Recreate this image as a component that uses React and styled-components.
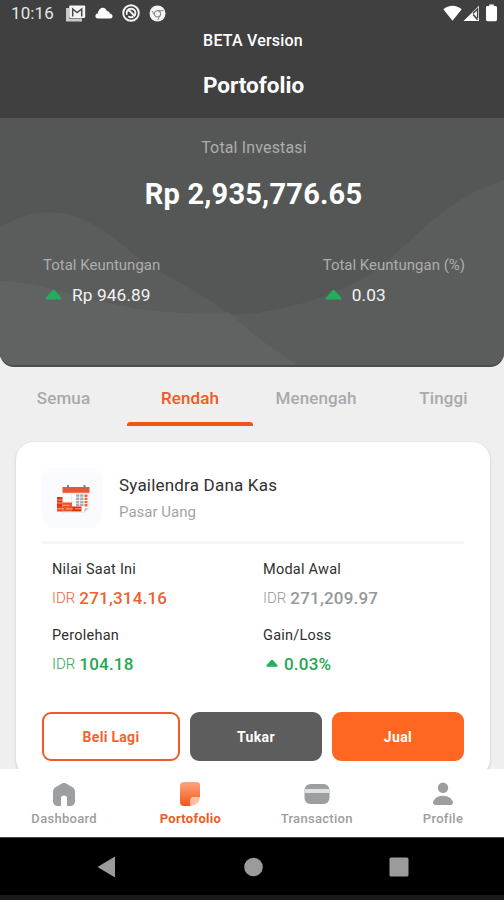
import React, { useState } from 'react'
import styled, { createGlobalStyle } from 'styled-components'

const GlobalStyle = createGlobalStyle`
  * {
    box-sizing: border-box;
  }

  body {
    margin: 0;
    background: #efefef;
    font-family: Roboto, sans-serif;
  }
`

const Screen = styled.div`
  width: 504px;
  height: 900px;
  display: flex;
  flex-direction: column;
  overflow: hidden;
  background: #efefef;
`

const Text = styled.span`
  display: block;
  white-space: nowrap;
  font-size: ${({ $size }) => $size}px;
  line-height: ${({ $line }) => $line || 20}px;
  font-weight: ${({ $weight }) => $weight || 400};
  letter-spacing: ${({ $track }) => $track || 0}px;
  color: ${({ $color }) => $color || 'inherit'};
`

const Header = styled.header`
  height: 118px;
  flex: none;
  background: #3f403f;
  color: #fff;
  text-align: center;
`

const StatusBar = styled.div`
  height: 26px;
  padding: 0 7px 0 11px;
  display: flex;
  align-items: center;
  justify-content: space-between;
  color: #e6e6e6;
`

const StatusGroup = styled.div`
  display: flex;
  align-items: center;
  gap: ${({ $gap }) => $gap}px;

  & svg {
    display: block;
  }
`

const StatusIcons = styled(StatusGroup)`
  margin-left: 3px;
`

const Title = styled.h1`
  margin: 21px 0 0;
  padding-left: 3px;
`

const Beta = styled.div`
  margin-top: 5px;
  padding-left: 2px;
`

const Summary = styled.section`
  height: 249px;
  flex: none;
  position: relative;
  overflow: hidden;
  border-radius: 0 0 14px 14px;
  background: #555756;
  border-bottom: 2px solid #4b4d4c;
`

const Waves = styled.svg`
  position: absolute;
  left: 0;
  top: 0;
`

const SummaryBody = styled.div`
  position: relative;
  padding-top: 20px;
  text-align: center;
  color: #fff;
`

const Caption = styled.div`
  padding-left: 4px;
`

const Amount = styled.div`
  margin-top: 19px;
  padding-left: 3px;
`

const GainRow = styled.div`
  margin-top: 44px;
  padding: 0 39px 0 43px;
  display: flex;
  justify-content: space-between;
  text-align: left;
`

const GainValue = styled.div`
  margin-top: 10px;
  padding-left: 2px;
  display: flex;
  align-items: center;
  gap: 10px;

  & svg {
    margin-bottom: 2px;
  }
`

const Tabs = styled.nav`
  height: 59px;
  flex: none;
  display: grid;
  grid-template-columns: 127px 126px 126px 125px;
`

const Tab = styled.button`
  padding: 21px 0 0;
  padding-left: ${({ $shift }) => $shift || 0}px;
  border: none;
  background: none;
  font-family: inherit;
  cursor: pointer;
  display: flex;
  flex-direction: column;
  align-items: center;
  justify-content: space-between;
  color: ${({ $active }) => ($active ? '#f25a1c' : '#a9aaaa')};

  &::after {
    content: '';
    width: 100%;
    height: 4px;
    border-radius: 3px 3px 0 0;
    background: ${({ $active }) => ($active ? '#ef5512' : 'transparent')};
  }
`

const Content = styled.main`
  flex: 1;
  overflow: hidden;
  padding: 16px 14px 0 16px;
`

const Card = styled.article`
  height: 335px;
  padding: 26px 26px 0;
  border-radius: 18px;
  background: #fff;
  box-shadow: 0 1px 3px rgba(0, 0, 0, 0.18);
`

const Product = styled.div`
  display: flex;
  gap: 17px;
  padding-bottom: 13px;
  border-bottom: 3px solid #f5f5f5;
`

const ProductIcon = styled.div`
  width: 60px;
  height: 60px;
  border-radius: 12px;
  background: #f9fbfe;
`

const ProductName = styled.div`
  padding-top: 7px;
  display: flex;
  flex-direction: column;
  gap: 7px;
`

const Figures = styled.div`
  padding: 16px 10px 0;
  display: grid;
  grid-template-columns: 211px 1fr;
  row-gap: 18px;
`

const FigureValue = styled.div`
  margin-top: 8px;
  height: 20px;
  display: flex;
  align-items: center;
  gap: 4px;
  color: ${({ $color }) => $color};
`

const SmallArrow = styled.div`
  width: 17px;
  height: 10px;
  display: flex;
  justify-content: center;
`

const Actions = styled.div`
  margin-top: 38px;
  display: grid;
  grid-template-columns: 138px 132px 132px;
  gap: 10px;
`

const ActionButton = styled.button`
  height: 49px;
  padding: 0;
  display: flex;
  align-items: center;
  justify-content: center;
  font-family: inherit;
  border-radius: 9px;
  border: 2px solid ${({ $border, $fill }) => $border || $fill};
  background: ${({ $fill }) => $fill};
  color: ${({ $color }) => $color || '#fff'};
  cursor: pointer;
`

const BottomNav = styled.nav`
  height: 68px;
  flex: none;
  padding-left: 1px;
  display: grid;
  grid-template-columns: repeat(4, 126.3px);
  background: #fff;
`

const NavItem = styled.button`
  padding: 12px 0 0;
  border: none;
  background: none;
  font-family: inherit;
  display: flex;
  flex-direction: column;
  align-items: center;
  gap: 2px;
  cursor: pointer;
  color: ${({ $active }) => ($active ? '#f25a1c' : '#9c9e9f')};
`

const SystemBar = styled.div`
  height: 63px;
  flex: none;
  padding: 1px 95px 0 97px;
  display: flex;
  align-items: center;
  justify-content: space-between;
  background: #000;
  border-top: 1px solid #4a4a4a;
  border-bottom: 5px solid #1a1a1a;
`

const UpArrow = ({ width = 17, height = 11 }) => (
  <svg
    width={width}
    height={height}
    viewBox="0 0 18 12"
    preserveAspectRatio="none"
  >
    <path
      d="M1.6 11.5C.4 11.5 0 10.4.9 9.5L7.5 1.7Q9 .2 10.5 1.7L17.1 9.5C18 10.4 17.6 11.5 16.4 11.5Z"
      fill="#21ae5d"
    />
  </svg>
)

const MailIcon = () => (
  <svg width="20" height="18" viewBox="0 0 20 18">
    <path d="M1.5 4V16H16" fill="none" stroke="#c9c9c9" strokeWidth="3" />
    <rect x="3.2" y="1.4" width="16" height="12.6" rx="1.2" fill="#f4f4f4" />
    <path
      d="M6.7 12.5V5L11.2 8.5 15.7 5v7.5"
      fill="none"
      stroke="#474847"
      strokeWidth="1.5"
    />
  </svg>
)

const CloudIcon = () => (
  <svg width="18" height="12" viewBox="0 0 18 12">
    <path
      d="M3 11.6C-.3 11.6-.6 7 2.7 6.5 3.4 3.3 5.3.8 7.7.8c2 0 3.2 1.2 4.1 3.1 2 0 2.6 1 2.9 2.7 3.7.2 3.8 5 .6 5Z"
      fill="#fff"
    />
  </svg>
)

const SyncIcon = () => (
  <svg width="18" height="18" viewBox="0 0 18 18" fill="none" stroke="#f4f4f4">
    <circle cx="9" cy="9" r="7.8" strokeWidth="1.9" />
    <path
      d="M4.9 10.7C3.7 7 6 4.6 9.2 4.7c3.8.1 5 3.7 3.8 6.4M5.2 7.2l2-.9 5.8 6.2M6.3 12.2c1.6 1.3 3.5 1.4 5 .4"
      strokeWidth="1.9"
    />
  </svg>
)

const ChromeIcon = () => (
  <svg width="17" height="17" viewBox="0 0 17 17">
    <circle cx="8.5" cy="8.5" r="8" fill="#f4f4f4" />
    <circle cx="8.5" cy="8.8" r="3.1" fill="none" stroke="#888" strokeWidth="1.1" />
    <path
      d="M8.5 5.6h6M5.7 10.3 3 6M11.2 10.4l-2.5 4.6"
      fill="none"
      stroke="#888"
      strokeWidth="1"
    />
  </svg>
)

const WifiIcon = () => (
  <svg width="19" height="16" viewBox="0 0 19 16">
    <path d="M.3 4.3C5.6-.6 13.4-.6 18.7 4.3L9.5 15.7Z" fill="#fff" />
  </svg>
)

const SignalIcon = () => (
  <svg width="17" height="17" viewBox="0 0 17 17">
    <path d="M.5 16 16 .7V16Z" fill="#fff" />
    <path d="M10 8.5 14.6 4v9" fill="none" stroke="#3f403f" strokeWidth="1.4" />
    <path d="m10.2 9.5 4.4 5.3" stroke="#3f403f" strokeWidth="1.6" />
  </svg>
)

const BatteryIcon = () => (
  <svg width="11" height="18" viewBox="0 0 11 18">
    <path
      d="M3.2 2V.6h4.6V2h1.5C10.3 2 11 2.7 11 3.6v12c0 .9-.7 1.6-1.7 1.6H1.7C.7 17.2 0 16.5 0 15.6v-12C0 2.7.7 2 1.7 2Z"
      fill="#fff"
    />
  </svg>
)

const CalendarIcon = () => (
  <svg width="60" height="60" viewBox="0 -1.5 60 60">
    <path d="M21 24H47V39L42 43H21Z" fill="#fff" stroke="#e6e7e9" strokeWidth=".7" />
    <path d="m42 43 .6-4.4L47 38.5Z" fill="#c9cbd0" />
    <rect x="20.5" y="17.5" width="27" height="5.8" fill="#e8582b" />
    <path d="M26 15.5v4M42.5 15.5v4" stroke="#777d85" strokeWidth="2" />
    <path
      d="M29.5 24v15M23 28.5h10M23 32.5h10"
      stroke="#e9eaec"
      strokeWidth=".8"
    />
    <path
      d="M34 26h7.5M34 29.3h7.5M34 32.6h7.5M34 35.6h7.5"
      stroke="#a9adb2"
      strokeWidth="2.5"
      strokeDasharray="3.4 .7"
    />
    <path
      d="M44 25v12"
      stroke="#e8653d"
      strokeWidth="3"
      strokeDasharray="2.4 .8"
    />
    <path d="M15 27.5h5.5v13H15Z" fill="#db3a14" />
    <path d="M15 30.5h5.5M15 33.5h5.5" stroke="#fbb898" strokeWidth=".8" />
    <path d="M20.5 33H30v9h-9.5Z" fill="#ea5527" />
    <path d="M15 37h5.5v5H15Z" fill="#e64a1c" />
    <path d="M30 37h9.5v5H30Z" fill="#d93310" />
    <path
      d="M20.5 35.8H30M15 39.3H39.5"
      stroke="#ffb48f"
      strokeWidth=".9"
      strokeDasharray="7 2"
    />
  </svg>
)

const HomeIcon = () => (
  <svg width="24" height="26" viewBox="0 0 24 26">
    <path
      d="M10.3 2.3Q12 1.2 13.7 2.3L21 6.6Q23 8 23 10.5V20Q23 25 18 25H15V17.5Q15 14.5 12 14.5T9 17.5V25H6Q1 25 1 20V10.5Q1 8 3 6.6Z"
      fill="#9c9e9f"
    />
  </svg>
)

const PortfolioIcon = () => (
  <svg width="22" height="26" viewBox="0 0 22 26">
    <defs>
      <linearGradient id="sheet" x1="0" y1="0" x2="0" y2="1">
        <stop offset="0" stopColor="#ffa47b" />
        <stop offset="1" stopColor="#f2561b" />
      </linearGradient>
    </defs>
    <path
      d="M5 1H18Q21 1 21 4V16H15Q11.5 16 11.5 19.5V25H5Q1 25 1 21V5Q1 1 5 1Z"
      fill="url(#sheet)"
    />
    <path d="M21 16Q20.5 24 11.5 25V19.5Q11.5 16 15 16Z" fill="#ffc0a4" />
  </svg>
)

const CardIcon = () => (
  <svg width="26" height="26" viewBox="0 0 26 26">
    <rect x=".5" y="3" width="25" height="20" rx="6" fill="#9c9e9f" />
    <rect x=".5" y="8" width="25" height="4" fill="#dfe0e0" />
  </svg>
)

const ProfileIcon = () => (
  <svg width="22" height="26" viewBox="0 0 22 26">
    <circle cx="11" cy="6.7" r="5.2" fill="#9c9e9f" />
    <path
      d="M3.3 24C1 24 .4 21.8 1.5 19.8 5 13 17 13 20.5 19.8 21.6 21.8 21 24 18.7 24Z"
      fill="#9c9e9f"
    />
  </svg>
)

const tabs = [
  { label: 'Semua' },
  { label: 'Rendah' },
  { label: 'Menengah' },
  { label: 'Tinggi', shift: 4 },
]

const figures = [
  { label: 'Nilai Saat Ini', value: '271,314.16', color: '#ee6231' },
  { label: 'Modal Awal', value: '271,209.97', color: '#94979a' },
  { label: 'Perolehan', value: '104.18', color: '#1fa851' },
  { label: 'Gain/Loss', value: '0.03%', color: '#1fa851', arrow: true },
]

const navItems = [
  { label: 'Dashboard', Icon: HomeIcon },
  { label: 'Portofolio', Icon: PortfolioIcon },
  { label: 'Transaction', Icon: CardIcon },
  { label: 'Profile', Icon: ProfileIcon },
]

const Gain = ({ label, value }) => (
  <div>
    <Text $size={15} $color="#acadac">
      {label}
    </Text>
    <GainValue>
      <UpArrow />
      <Text $size={17.3} $track={0.1} $color="#f2f2f2">
        {value}
      </Text>
    </GainValue>
  </div>
)

const Figure = ({ label, value, color, arrow }) => (
  <div>
    <Text $size={14.5} $color="#303030" $track={0.25}>
      {label}
    </Text>
    <FigureValue $color={color}>
      {arrow ? (
        <SmallArrow>
          <UpArrow width={12} height={8} />
        </SmallArrow>
      ) : (
        <Text $size={15} $weight={300}>
          IDR
        </Text>
      )}
      <Text $size={17} $weight={500} $track={0.2}>
        {value}
      </Text>
    </FigureValue>
  </div>
)

const App = () => {
  const [tab, setTab] = useState('Rendah')
  const [page, setPage] = useState('Portofolio')

  return (
    <Screen>
      <GlobalStyle />
      <Header>
        <StatusBar>
          <StatusGroup $gap={9}>
            <Text $size={17} $track={0.1}>
              10:16
            </Text>
            <StatusIcons $gap={9}>
              <MailIcon />
              <CloudIcon />
              <SyncIcon />
              <ChromeIcon />
            </StatusIcons>
          </StatusGroup>
          <StatusGroup $gap={6}>
            <StatusGroup $gap={1}>
              <WifiIcon />
              <SignalIcon />
            </StatusGroup>
            <BatteryIcon />
          </StatusGroup>
        </StatusBar>
        <Beta>
          <Text $size={16} $weight={500} $track={0.2}>
            BETA Version
          </Text>
        </Beta>
        <Title>
          <Text $size={22.5} $weight={700} $line={26}>
            Portofolio
          </Text>
        </Title>
      </Header>

      <Summary>
        <Waves width="504" height="249" viewBox="0 0 504 249">
          <path
            d="M0 109C45 84 82 90 132 135C178 168 200 170 250 213C266 226 285 239 300 249H0Z"
            fill="#5b5d5c"
          />
          <path
            d="M504 62C440 82 415 124 370 157C325 182 290 190 250 196C180 199 130 190 82 177C50 170 25 164 0 163V249H504Z"
            fill="#5b5d5c"
          />
          <path
            d="M0 163C50 164 100 190 170 194Q210 197 229 195Q240 204 250 213C266 226 285 239 300 249H0Z"
            fill="#606361"
          />
        </Waves>
        <SummaryBody>
          <Caption>
            <Text $size={16} $track={0.15} $color="#acadac">
              Total Investasi
            </Text>
          </Caption>
          <Amount>
            <Text $size={29} $weight={700} $line={34} $track={0.2}>
              Rp 2,935,776.65
            </Text>
          </Amount>
          <GainRow>
            <Gain label="Total Keuntungan" value="Rp 946.89" />
            <Gain label="Total Keuntungan (%)" value="0.03" />
          </GainRow>
        </SummaryBody>
      </Summary>

      <Tabs>
        {tabs.map(({ label, shift }) => (
          <Tab
            key={label}
            $active={label === tab}
            $shift={shift}
            onClick={() => setTab(label)}
          >
            <Text $size={17} $weight={500} $track={0.1}>
              {label}
            </Text>
          </Tab>
        ))}
      </Tabs>

      <Content>
        <Card>
          <Product>
            <ProductIcon>
              <CalendarIcon />
            </ProductIcon>
            <ProductName>
              <Text $size={17} $color="#303030" $track={0.2}>
                Syailendra Dana Kas
              </Text>
              <Text $size={15} $color="#a2a4a6">
                Pasar Uang
              </Text>
            </ProductName>
          </Product>
          <Figures>
            {figures.map((figure) => (
              <Figure key={figure.label} {...figure} />
            ))}
          </Figures>
          <Actions>
            <ActionButton $fill="#fff" $border="#f05a28" $color="#f2632e">
              <Text $size={14} $weight={700} $track={0.3}>
                Beli Lagi
              </Text>
            </ActionButton>
            <ActionButton $fill="#5d5d5d">
              <Text $size={14} $weight={700} $track={0.4}>
                Tukar
              </Text>
            </ActionButton>
            <ActionButton $fill="#fe6721">
              <Text $size={14} $weight={700} $track={0.4}>
                Jual
              </Text>
            </ActionButton>
          </Actions>
        </Card>
      </Content>

      <BottomNav>
        {navItems.map(({ label, Icon }) => (
          <NavItem
            key={label}
            $active={label === page}
            onClick={() => setPage(label)}
          >
            <Icon />
            <Text
              $size={13}
              $weight={label === page ? 700 : 500}
              $track={0.3}
            >
              {label}
            </Text>
          </NavItem>
        ))}
      </BottomNav>

      <SystemBar>
        <svg width="19" height="22" viewBox="0 0 19 22">
          <path d="M.5 11 18 .5V21.5Z" fill="#9b9b9b" />
        </svg>
        <svg width="20" height="20" viewBox="0 0 20 20">
          <circle cx="10.5" cy="10" r="9.3" fill="#9b9b9b" />
        </svg>
        <svg width="20" height="20" viewBox="0 0 20 20">
          <rect x=".5" y=".5" width="19" height="19" rx="1.5" fill="#9b9b9b" />
        </svg>
      </SystemBar>
    </Screen>
  )
}

export default App
